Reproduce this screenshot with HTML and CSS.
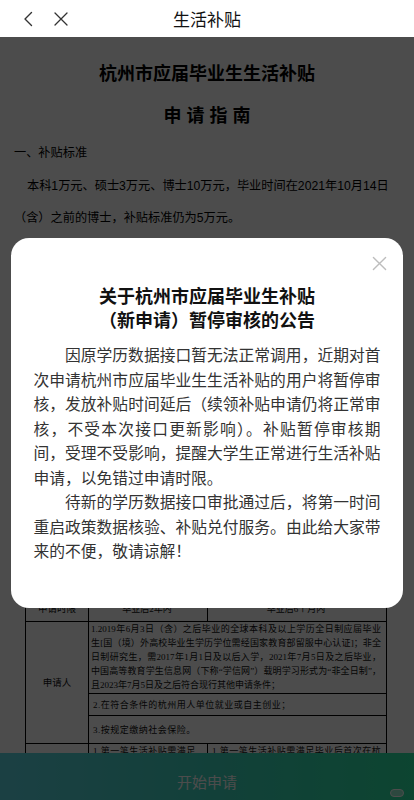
FILE: index.html
```html
<!DOCTYPE html>
<html lang="zh-CN">
<head>
<meta charset="utf-8">
<meta name="viewport" content="width=device-width, initial-scale=1">
<title>生活补贴</title>
<link rel="stylesheet" href="styles.css">
</head>
<body>
<div class="app">
  <header class="nav">
    <div class="nav-left">
      <button class="nav-btn" aria-label="返回">
        <svg width="10" height="16" viewBox="0 0 10 16"><path d="M8.5 1.5 L2 8 L8.5 14.5" fill="none" stroke="#333" stroke-width="1.4" stroke-linecap="round" stroke-linejoin="round"/></svg>
      </button>
      <button class="nav-btn" aria-label="关闭">
        <svg width="14" height="14" viewBox="0 0 14 14"><path d="M1 1 L13 13 M13 1 L1 13" fill="none" stroke="#333" stroke-width="1.3" stroke-linecap="round"/></svg>
      </button>
    </div>
    <h1 class="nav-title">生活补贴</h1>
    <div class="nav-right"></div>
  </header>

  <main class="page">
    <article class="doc">
      <h2 class="doc-title">杭州市应届毕业生生活补贴</h2>
      <h3 class="doc-sub">申请指南</h3>
      <p class="sec">一、补贴标准</p>
      <p class="para">本科1万元、硕士3万元、博士10万元，毕业时间在2021年10月14日（含）之前的博士，补贴标准仍为5万元。</p>

      <div class="table">
        <div class="cell label">申请时限</div>
        <div class="cell center">毕业后2年内</div>
        <div class="cell center">毕业后6个月内</div>

        <div class="cell label applicant">申请人</div>
        <div class="cell wide just">
          <span>1.2019年6月3日（含）之后毕业的全球本科及以上学历全日制应届毕业</span>
          <span>生[国（境）外高校毕业生学历学位需经国家教育部留服中心认证]；非全</span>
          <span>日制研究生，需2017年1月1日及以后入学，2021年7月5日及之后毕业，</span>
          <span>中国高等教育学生信息网（下称“学信网”）载明学习形式为“非全日制”，</span>
          <span class="last">且2023年7月5日及之后符合现行其他申请条件；</span>
        </div>
        <div class="cell wide spaced">2.在符合条件的杭州用人单位就业或自主创业；</div>
        <div class="cell wide spaced">3.按规定缴纳社会保险。</div>

        <div class="cell label">申请材料</div>
        <div class="cell top">1.第一笔生活补贴需满足此前</div>
        <div class="cell top">1.第一笔生活补贴需满足毕业后首次在杭就业</div>
      </div>
    </article>

    <div class="apply-bar">
      <span class="apply-text">开始申请</span>
      <span class="pill"></span>
    </div>
  </main>

  <div class="overlay">
    <section class="modal" role="dialog" aria-labelledby="notice-title">
      <button class="modal-close" aria-label="关闭">
        <svg width="15" height="15" viewBox="0 0 16 16"><path d="M1.5 1.5 L14.5 14.5 M14.5 1.5 L1.5 14.5" fill="none" stroke="#bdbdbd" stroke-width="1.5" stroke-linecap="round"/></svg>
      </button>
      <h2 class="modal-title" id="notice-title">关于杭州市应届毕业生补贴<br>（新申请）暂停审核的公告</h2>
      <div class="modal-body">
        <p>因原学历数据接口暂无法正常调用，近期对首次申请杭州市应届毕业生生活补贴的用户将暂停审核，发放补贴时间延后（续领补贴申请仍将正常审核，不受本次接口更新影响）。补贴暂停审核期间，受理不受影响，提醒大学生正常进行生活补贴申请，以免错过申请时限。</p>
        <p>待新的学历数据接口审批通过后，将第一时间重启政策数据核验、补贴兑付服务。由此给大家带来的不便，敬请谅解！</p>
      </div>
    </section>
  </div>
</div>
</body>
</html>
```

FILE: styles.css
```css
* {
  box-sizing: border-box;
  margin: 0;
  padding: 0;
}

html, body {
  width: 414px;
  height: 800px;
  overflow: hidden;
}

body {
  font-family: "Noto Sans CJK SC", "Liberation Sans", sans-serif;
  background: #fff;
  color: #111;
}

button {
  border: 0;
  background: none;
  cursor: pointer;
  font: inherit;
}

.app {
  position: relative;
  width: 414px;
  height: 800px;
  overflow: hidden;
}

/* ---------- top navigation ---------- */
.nav {
  height: 37px;
  display: grid;
  grid-template-columns: 1fr auto 1fr;
  align-items: center;
  background: #fff;
}

.nav-left {
  display: flex;
  align-items: center;
  gap: 17px;
  padding-left: 20px;
}

.nav-btn {
  width: 16px;
  height: 18px;
  display: flex;
  align-items: center;
  justify-content: center;
}

.nav-title {
  font-size: 17px;
  font-weight: 400;
  line-height: 24px;
  color: #111;
}

/* ---------- document page ---------- */
.page {
  position: relative;
  height: 763px;
  overflow: hidden;
  background: #fff;
}

.doc {
  padding: 0 14px;
  font-family: "Liberation Sans", "Noto Sans CJK SC", sans-serif;
  color: #000;
}

.doc-title {
  margin-top: 21px;
  font-family: "Noto Sans CJK SC", sans-serif;
  font-size: 18px;
  font-weight: 700;
  line-height: 28px;
  text-align: center;
}

.doc-sub {
  margin-top: 14px;
  font-family: "Noto Sans CJK SC", sans-serif;
  font-size: 18px;
  font-weight: 700;
  line-height: 28px;
  text-align: center;
  letter-spacing: 5px;
  text-indent: 5px;
}

.sec {
  margin-top: 9px;
  font-size: 12.2px;
  line-height: 32px;
}

.para {
  margin-top: 1px;
  font-size: 12.2px;
  line-height: 32px;
  text-indent: 13px;
}

/* ---------- table (grid) ---------- */
.table {
  margin: 361px 0 0 11px;
  width: 362px;
  display: grid;
  grid-template-columns: 63px 119px 179px;
  grid-template-rows: 26px 72px 22px 28px 60px;
  border-top: 1px solid #000;
  border-left: 1px solid #000;
  font-family: "Liberation Serif", "Noto Sans CJK SC", serif;
  font-size: 9px;
  line-height: 14px;
  color: #111;
}

.cell {
  border-right: 1px solid #000;
  border-bottom: 1px solid #000;
  padding: 0 4px 0 2px;
  overflow: hidden;
}

.cell.label {
  display: flex;
  align-items: center;
  justify-content: center;
  font-size: 9.5px;
  padding: 0;
}

.cell.center {
  display: flex;
  align-items: center;
  justify-content: center;
}

.cell.applicant {
  grid-row: span 3;
}

.cell.wide {
  grid-column: span 2;
}

.cell.just {
  padding: 0 5px 0 2px;
}

.cell.just span {
  display: block;
  text-align: justify;
  text-align-last: justify;
}

.cell.just span.last {
  text-align-last: left;
}

.cell.spaced {
  display: flex;
  align-items: center;
  padding-left: 4px;
  letter-spacing: 0.5px;
}

.cell.top {
  padding: 0 4px 0 4px;
  letter-spacing: 0.5px;
}

/* ---------- bottom action bar ---------- */
.apply-bar {
  position: absolute;
  left: 0;
  right: 0;
  bottom: 0;
  height: 47px;
  padding-top: 10px;
  display: flex;
  align-items: center;
  justify-content: center;
  background: linear-gradient(90deg, #5cd7e2 0%, #3ed6c0 50%, #2be6a3 100%);
  color: #fff;
  font-size: 15px;
}

.apply-text {
  line-height: 22px;
}

.pill {
  position: absolute;
  right: 10px;
  bottom: 3px;
  width: 14px;
  height: 8px;
  border-radius: 4px;
  border: 1px solid #fff;
  background: rgba(255, 255, 255, 0.5);
}

/* ---------- modal ---------- */
.overlay {
  position: absolute;
  top: 37px;
  left: 0;
  right: 0;
  bottom: 0;
  z-index: 10;
  background: rgba(0, 0, 0, 0.7);
  padding: 201px 11px 0;
}

.modal {
  position: relative;
  background: #fff;
  border-radius: 18px;
  padding: 45px 22.5px 44px;
}

.modal-close {
  position: absolute;
  top: 14px;
  right: 13px;
  width: 22px;
  height: 22px;
  display: flex;
  align-items: center;
  justify-content: center;
}

.modal-title {
  font-size: 18px;
  font-weight: 700;
  line-height: 24px;
  text-align: center;
  color: #111;
}

.modal-body {
  margin-top: 12px;
  font-size: 15.75px;
  line-height: 24.5px;
  color: #333;
  text-align: justify;
}

.modal-body p {
  text-indent: 2em;
}
```
